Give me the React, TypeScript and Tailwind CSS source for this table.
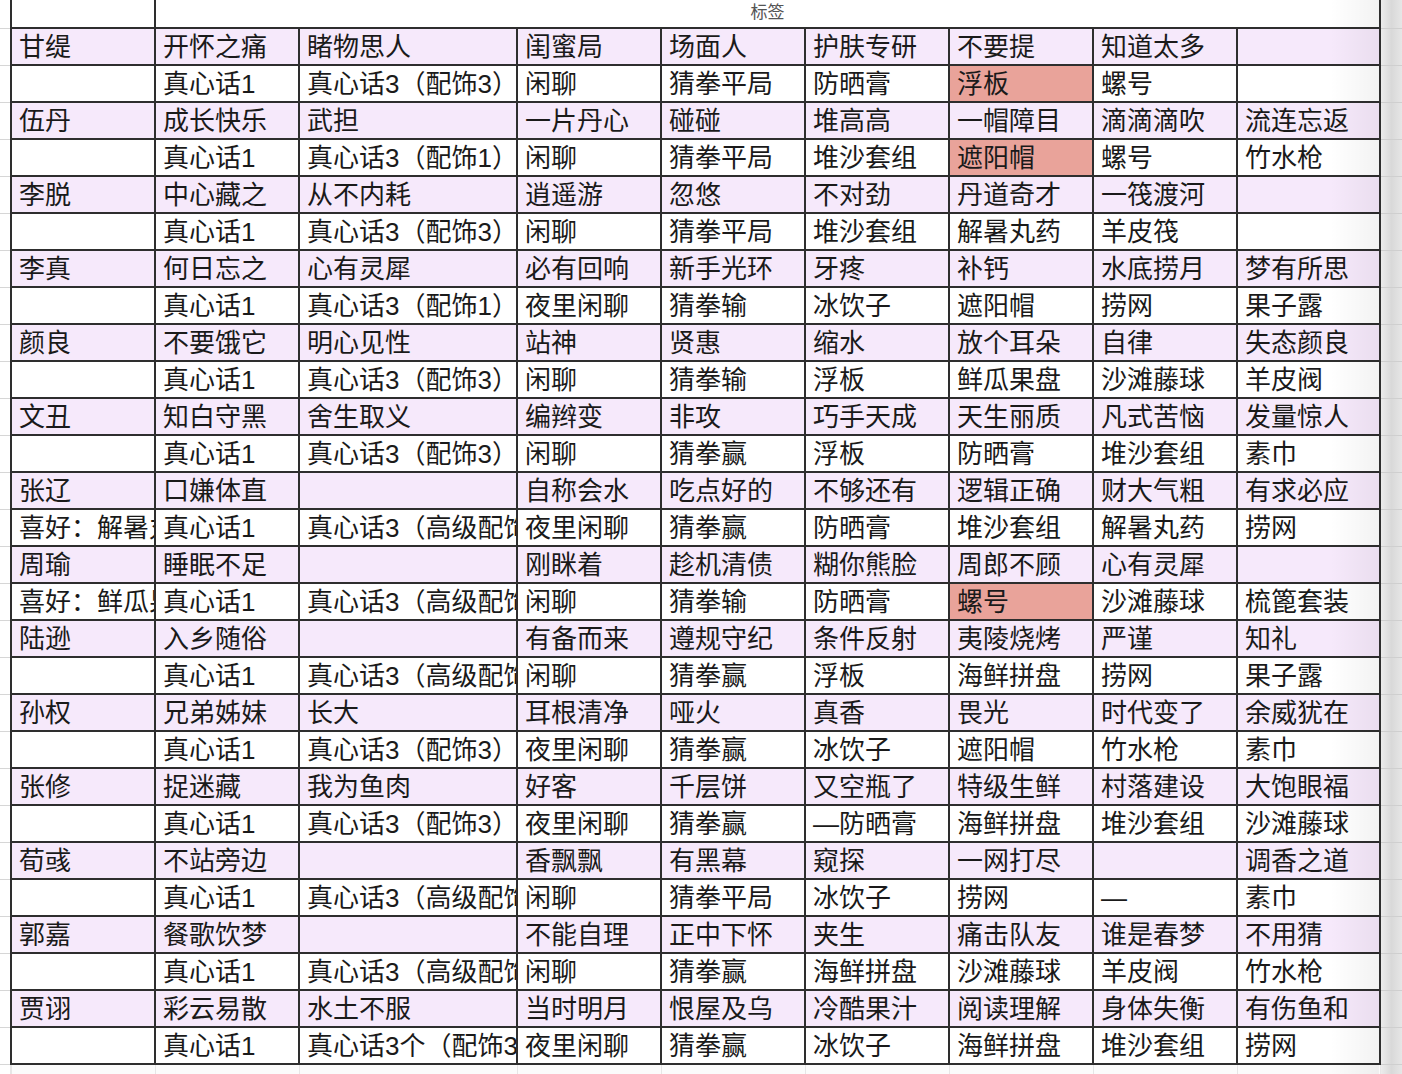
const COLS = [
  "w-[144px]",
  "w-[144px]",
  "w-[218px]",
  "w-[144px]",
  "w-[144px]",
  "w-[144px]",
  "w-[144px]",
  "w-[144px]",
  "w-[143px]",
]

type Row = { cells: string[]; red?: number }

const ROWS: Row[] = [
  { cells: ["甘缇", "开怀之痛", "睹物思人", "闺蜜局", "场面人", "护肤专研", "不要提", "知道太多", ""] },
  { cells: ["", "真心话1", "真心话3（配饰3）", "闲聊", "猜拳平局", "防晒膏", "浮板", "螺号", ""], red: 6 },
  { cells: ["伍丹", "成长快乐", "武担", "一片丹心", "碰碰", "堆高高", "一帽障目", "滴滴滴吹", "流连忘返"] },
  { cells: ["", "真心话1", "真心话3（配饰1）", "闲聊", "猜拳平局", "堆沙套组", "遮阳帽", "螺号", "竹水枪"], red: 6 },
  { cells: ["李脱", "中心藏之", "从不内耗", "逍遥游", "忽悠", "不对劲", "丹道奇才", "一筏渡河", ""] },
  { cells: ["", "真心话1", "真心话3（配饰3）", "闲聊", "猜拳平局", "堆沙套组", "解暑丸药", "羊皮筏", ""] },
  { cells: ["李真", "何日忘之", "心有灵犀", "必有回响", "新手光环", "牙疼", "补钙", "水底捞月", "梦有所思"] },
  { cells: ["", "真心话1", "真心话3（配饰1）", "夜里闲聊", "猜拳输", "冰饮子", "遮阳帽", "捞网", "果子露"] },
  { cells: ["颜良", "不要饿它", "明心见性", "站神", "贤惠", "缩水", "放个耳朵", "自律", "失态颜良"] },
  { cells: ["", "真心话1", "真心话3（配饰3）", "闲聊", "猜拳输", "浮板", "鲜瓜果盘", "沙滩藤球", "羊皮阀"] },
  { cells: ["文丑", "知白守黑", "舍生取义", "编辫变", "非攻", "巧手天成", "天生丽质", "凡式苦恼", "发量惊人"] },
  { cells: ["", "真心话1", "真心话3（配饰3）", "闲聊", "猜拳赢", "浮板", "防晒膏", "堆沙套组", "素巾"] },
  { cells: ["张辽", "口嫌体直", "", "自称会水", "吃点好的", "不够还有", "逻辑正确", "财大气粗", "有求必应"] },
  { cells: ["喜好：解暑丸药", "真心话1", "真心话3（高级配饰）", "夜里闲聊", "猜拳赢", "防晒膏", "堆沙套组", "解暑丸药", "捞网"] },
  { cells: ["周瑜", "睡眠不足", "", "刚眯着", "趁机清债", "糊你熊脸", "周郎不顾", "心有灵犀", ""] },
  { cells: ["喜好：鲜瓜果盘", "真心话1", "真心话3（高级配饰）", "闲聊", "猜拳输", "防晒膏", "螺号", "沙滩藤球", "梳篦套装"], red: 6 },
  { cells: ["陆逊", "入乡随俗", "", "有备而来", "遵规守纪", "条件反射", "夷陵烧烤", "严谨", "知礼"] },
  { cells: ["", "真心话1", "真心话3（高级配饰）", "闲聊", "猜拳赢", "浮板", "海鲜拼盘", "捞网", "果子露"] },
  { cells: ["孙权", "兄弟姊妹", "长大", "耳根清净", "哑火", "真香", "畏光", "时代变了", "余威犹在"] },
  { cells: ["", "真心话1", "真心话3（配饰3）", "夜里闲聊", "猜拳赢", "冰饮子", "遮阳帽", "竹水枪", "素巾"] },
  { cells: ["张修", "捉迷藏", "我为鱼肉", "好客", "千层饼", "又空瓶了", "特级生鲜", "村落建设", "大饱眼福"] },
  { cells: ["", "真心话1", "真心话3（配饰3）", "夜里闲聊", "猜拳赢", "—防晒膏", "海鲜拼盘", "堆沙套组", "沙滩藤球"] },
  { cells: ["荀彧", "不站旁边", "", "香飘飘", "有黑幕", "窥探", "一网打尽", "", "调香之道"] },
  { cells: ["", "真心话1", "真心话3（高级配饰）", "闲聊", "猜拳平局", "冰饮子", "捞网", "—", "素巾"] },
  { cells: ["郭嘉", "餐歌饮梦", "", "不能自理", "正中下怀", "夹生", "痛击队友", "谁是春梦", "不用猜"] },
  { cells: ["", "真心话1", "真心话3（高级配饰）", "闲聊", "猜拳赢", "海鲜拼盘", "沙滩藤球", "羊皮阀", "竹水枪"] },
  { cells: ["贾诩", "彩云易散", "水土不服", "当时明月", "恨屋及乌", "冷酷果汁", "阅读理解", "身体失衡", "有伤鱼和"] },
  { cells: ["", "真心话1", "真心话3个（配饰3）", "夜里闲聊", "猜拳赢", "冰饮子", "海鲜拼盘", "堆沙套组", "捞网"] },
]

function RightGutter() {
  return <div className="flex-1 border-b border-[#cfcfcf] bg-linear-to-r from-[#ececec] via-[#d9d9d9] to-[#e6e6e6]" />
}

export default function App() {
  return (
    <div className="relative min-h-screen overflow-hidden bg-white font-['Liberation_Sans','Noto_Sans_CJK_SC',sans-serif] text-[#1a1a1a]">
      {/* header row: merged 标签 cell */}
      <div className="flex h-[29px]">
        <div className="w-[10px] shrink-0 border-b border-[#d6d6d6]" />
        <div className="flex shrink-0 border-b-2 border-l-2 border-[#2e2e2e]">
          <div className="w-[144px] shrink-0 border-r-2 border-[#2e2e2e]" />
          <div className="w-[1225px] shrink-0 border-r-2 border-[#2e2e2e] pt-[1px] text-center text-[17px] leading-[24px] text-[#555]">
            标签
          </div>
        </div>
        <RightGutter />
      </div>

      {ROWS.map((row, r) => (
        <div key={r} className="flex h-[37px]">
          <div className="w-[10px] shrink-0 border-b border-[#d6d6d6]" />
          <div
            className={`flex shrink-0 border-b-2 border-l-2 border-[#2e2e2e] ${r % 2 === 0 ? "bg-[#f6e9fb]" : "bg-white"}`}
          >
            {row.cells.map((c, i) => (
              <div
                key={i}
                className={`${COLS[i]} shrink-0 overflow-hidden whitespace-nowrap border-r-2 border-[#2e2e2e] pl-[7px] pt-[2px] text-[26px] leading-[33px] ${row.red === i ? "bg-[#e9a39a]" : ""}`}
              >
                {c}
              </div>
            ))}
          </div>
          <RightGutter />
        </div>
      ))}

      {/* empty sheet area below the table */}
      <div className="flex h-[12px]">
        <div className="w-[10px] shrink-0" />
        <div className="flex shrink-0 border-l-2 border-[#e6e6e6] bg-[#fbfbfb]">
          {COLS.map((w, i) => (
            <div key={i} className={`${w} shrink-0 border-r border-[#e6e6e6]`} />
          ))}
        </div>
        <div className="flex-1 bg-linear-to-r from-[#ececec] via-[#d9d9d9] to-[#e6e6e6]" />
      </div>

      {/* frozen-pane shadow along the right edge */}
      <div className="pointer-events-none absolute bottom-0 left-[1330px] top-0 w-[49px] bg-linear-to-r from-transparent to-black/5" />
    </div>
  )
}
